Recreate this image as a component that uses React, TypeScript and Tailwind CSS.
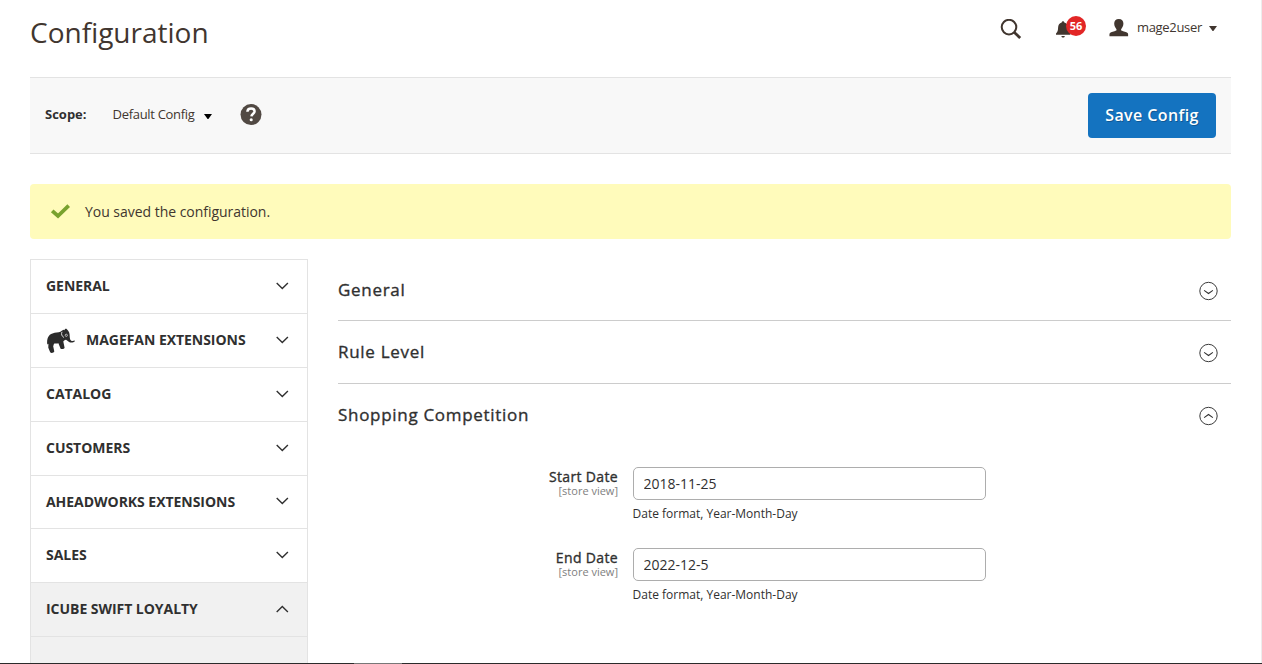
import React from 'react';

type NavItem = { label: string; height: string; open?: boolean; logo?: boolean };

const NAV: NavItem[] = [
  { label: 'GENERAL', height: 'h-[54px]' },
  { label: 'MAGEFAN EXTENSIONS', height: 'h-[54px]', logo: true },
  { label: 'CATALOG', height: 'h-[54px]' },
  { label: 'CUSTOMERS', height: 'h-[54px]' },
  { label: 'AHEADWORKS EXTENSIONS', height: 'h-[53px]' },
  { label: 'SALES', height: 'h-[54px]' },
  { label: 'ICUBE SWIFT LOYALTY', height: 'h-[54px]', open: true },
];

function SearchIcon() {
  return (
    <svg width="22" height="22" viewBox="0 0 22 22" fill="none" stroke="#41362f">
      <circle cx="9" cy="8.1" r="7.3" strokeWidth="2" />
      <path d="M14.2 13.3L20.2 19" strokeWidth="2.8" />
    </svg>
  );
}

function BellIcon() {
  return (
    <svg width="15" height="17" viewBox="0 0 15 17" fill="#41362f">
      <path d="M7 0.3c0.9 0 1.2 0.6 1.3 1.2C10.900 2 12 4 12.100 6.500c0.100 3 0.600 4.400 2.300 5.900v1.400H0v-1.400c1.700-1.500 2-2.900 2.100-5.900C2.200 4 3.300 2 5.700 1.500C5.800 0.900 6.100 0.300 7 0.300z" />
      <path d="M5.400 15h3.400c-0.100 1-0.800 1.600-1.700 1.600s-1.600-0.600-1.700-1.600z" />
    </svg>
  );
}

function UserIcon() {
  return (
    <svg width="20" height="18" viewBox="0 0 20 18" fill="#41362f">
      <path d="M9.800 0c3 0 4.600 1.900 4.600 4.600c0 2.300-1 4.200-2.100 5.300c-0.400 0.500-0.300 1.400 0.200 1.700c1.900 1 5 1.500 6.100 2.400c0.600 0.500 0.600 1.900 0.500 3.200H0.500c-0.100-1.300-0.100-2.700 0.500-3.200c1.100-0.900 4.200-1.400 6.100-2.400c0.500-0.300 0.600-1.200 0.200-1.700C6.200 8.800 5.200 6.900 5.200 4.600C5.200 1.900 6.800 0 9.800 0z" />
    </svg>
  );
}

function HelpIcon() {
  return (
    <svg width="22" height="22" viewBox="0 0 22 22">
      <circle cx="11" cy="10.600" r="10.500" fill="#514943" />
      <path
        d="M7.400 7.700C7.500 5.500 9 4.400 11.100 4.400c2.100 0 3.500 1.100 3.500 2.900c0 2.300-3 2.500-3.200 5.100"
        fill="none"
        stroke="#fff"
        strokeWidth="2.500"
      />
      <circle cx="11.200" cy="15.800" r="1.550" fill="#fff" />
    </svg>
  );
}

function Caret({ color }: { color: string }) {
  return (
    <svg width="8" height="5" viewBox="0 0 8 5" fill={color}>
      <path d="M0 0h8L4.400 5h-0.800z" />
    </svg>
  );
}

function Chevron({ up }: { up?: boolean }) {
  return (
    <svg width="14" height="8" viewBox="0 0 14 8" fill="none" stroke="#303030" strokeWidth="1.400">
      <path d={up ? 'M1.700 7L7.300 1.500L12.900 7' : 'M1.700 1L7.300 6.500L12.900 1'} />
    </svg>
  );
}

function CircleChevron({ up }: { up?: boolean }) {
  return (
    <svg width="20" height="20" viewBox="0 0 20 20" fill="none" stroke="#303030">
      <circle cx="9.500" cy="10" r="8.700" strokeWidth="0.950" />
      <path d={up ? 'M5.100 11.600L9.500 8.500L13.900 11.600' : 'M5.100 9.400L9.500 12.500L13.900 9.400'} strokeWidth="1.050" />
    </svg>
  );
}

function ElephantIcon() {
  return (
    <svg width="30" height="26" viewBox="0 0 30 26" fill="#2b2b2b">
      <path d="M1.300 16.500C0.500 11 2.500 6.500 6.500 5.500C9.500 4.300 12 5 14.500 3.800C15.500 2.500 16.500 2.600 17.200 1.700L18.300 2.200C18.700 1 19.500 0.300 20.400 0.800C21.500 2 23.500 3.500 23.600 6.500C23.800 9 23.600 11.300 25 12.600C26 13.400 27.300 13.100 28.700 12.600L28.900 13.300C27.500 14.600 25 15 23 13.900C21.800 13.200 21 12.200 20 11.800C18.500 12.200 17.700 12.600 17.300 13.600L18.600 19.700C18.500 20.900 15.800 21.600 14.600 20.700L12.400 15.200C11 15.900 9.500 15.300 8 15.700L7.200 18.300L8.300 23.500C8 24.900 5 25.500 4.200 24.300L2.300 19.700L2.400 15.800z" />
      <path d="M16 3.800C15 6 15.700 8.300 18 9.500" fill="none" stroke="#fff" strokeWidth="0.800" />
      <circle cx="20.300" cy="7.300" r="1.100" fill="none" stroke="#fff" strokeWidth="0.600" />
    </svg>
  );
}

function Section({ title, open, className }: { title: string; open?: boolean; className: string }) {
  return (
    <div className={`flex justify-between pr-3 ${className}`}>
      <h2 className="text-[17px] leading-6 tracking-[0.7px] text-[#303030] [-webkit-text-stroke:0.35px_#303030]">
        {title}
      </h2>
      <span className="mt-[3px]">
        <CircleChevron up={open} />
      </span>
    </div>
  );
}

function Field({ label, value }: { label: string; value: string }) {
  return (
    <div className="flex h-[81px]">
      <div className="w-[280px] pt-[2px] text-right">
        <div className="text-[14px] leading-[15px] tracking-[0.35px] text-[#303030] [-webkit-text-stroke:0.35px_#303030]">
          {label}
        </div>
        <div className="text-[11px] leading-[13px] text-[#808080]">[store view]</div>
      </div>
      <div className="ml-[15px] w-[353px]">
        <input
          className="block h-[33px] w-full rounded-[5px] border border-[#adadad] bg-white px-[9.5px] text-[14px] text-[#303030] outline-none"
          defaultValue={value}
        />
        <p className="mt-[5px] -ml-[0.5px] text-[12px] leading-[18px] text-[#303030]">Date format, Year-Month-Day</p>
      </div>
    </div>
  );
}

export default function App() {
  return (
    <div className="flex h-[664px] w-[1262px] flex-col overflow-hidden bg-white font-['Open_Sans',sans-serif] text-[#303030]">
      <div className="flex h-[663px] flex-col overflow-hidden border-r border-[#ededed] pr-[30px] pl-[30px]">
        <header className="flex h-[77px] shrink-0 justify-between">
          <h1 className="mt-[12px] text-[28px] leading-[40px] text-[#41362f]">Configuration</h1>
          <div className="flex pr-[14px]">
            <span className="mt-[19px] mr-[34px]">
              <SearchIcon />
            </span>
            <span className="relative mt-[21px] mr-[38px]">
              <BellIcon />
              <span className="absolute -top-[5px] left-[10px] flex h-5 w-5 items-center justify-center rounded-full bg-[#e22626] text-[11px] font-bold text-white">
                56
              </span>
            </span>
            <span className="mt-[19px] mr-2">
              <UserIcon />
            </span>
            <span className="mt-[17px] mr-[7px] w-[65px] text-[13px] leading-5 tracking-[-0.33px] whitespace-nowrap text-[#41362f]">
              mage2user
            </span>
            <span className="mt-[26px]">
              <Caret color="#41362f" />
            </span>
          </div>
        </header>

        <div className="flex h-[77px] shrink-0 border-y border-[#e3e3e3] bg-[#f8f8f8] px-[15px]">
          <span className="mt-[26px] w-[67.5px] text-[13px] leading-5 font-bold text-[#303030]">Scope:</span>
          <span className="mt-[26px] mr-2 w-[83.5px] text-[13px] leading-5 tracking-[-0.3px] whitespace-nowrap text-[#41362f]">
            Default Config
          </span>
          <span className="mt-[36px] mr-7">
            <Caret color="#000" />
          </span>
          <span className="mt-[26px]">
            <HelpIcon />
          </span>
          <button className="mt-[15px] ml-auto h-[45px] w-32 rounded-[4px] bg-[#1473c0] pb-[2px] text-[16px] font-semibold tracking-[0.4px] text-white [text-shadow:1px_1px_0_rgba(0,0,0,0.25)]">
            Save Config
          </button>
        </div>

        <div className="mt-[30px] flex h-[55px] shrink-0 items-center rounded-[4px] bg-[#fffbbb] pl-5">
          <svg width="20" height="15" viewBox="0 0 20 15" fill="none" stroke="#79a22e" strokeWidth="3.800">
            <path d="M2.200 6.800L8 12L18.700 1.600" />
          </svg>
          <span className="ml-[15px] text-[14px] tracking-[-0.03px] text-[#41362f]">You saved the configuration.</span>
        </div>

        <div className="mt-5 flex h-[410px]">
          <nav className="w-[278px] shrink-0 border-x border-[#e3e3e3]">
            {NAV.map((n) => (
              <div
                key={n.label}
                className={`flex items-center border-t border-[#e3e3e3] pr-[18px] pb-[2px] pl-[15px] ${n.height} ${n.open ? 'bg-[#f1f1f1]' : ''}`}
              >
                {n.logo && (
                  <span className="mt-[2px] mr-[10px]">
                    <ElephantIcon />
                  </span>
                )}
                <span className="flex-1 text-[14px] font-bold tracking-[-0.04px] whitespace-nowrap text-[#303030]">
                  {n.label}
                </span>
                <Chevron up={n.open} />
              </div>
            ))}
            <div className="h-8 border-t border-[#e3e3e3] bg-[#f1f1f1]" />
          </nav>
          <main className="ml-[30px] flex-1">
            <Section title="General" className="h-[62px] border-b border-[#cccccc] pt-[19px]" />
            <Section title="Rule Level" className="h-[63px] border-b border-[#cccccc] pt-[19px]" />
            <Section title="Shopping Competition" open className="h-[83px] pt-[19px]" />
            <Field label="Start Date" value="2018-11-25" />
            <Field label="End Date" value="2022-12-5" />
          </main>
        </div>
      </div>
      <div className="flex h-px bg-[#2b2b2b]">
        <div className="ml-[354px] w-12 bg-[#777]" />
      </div>
    </div>
  );
}
